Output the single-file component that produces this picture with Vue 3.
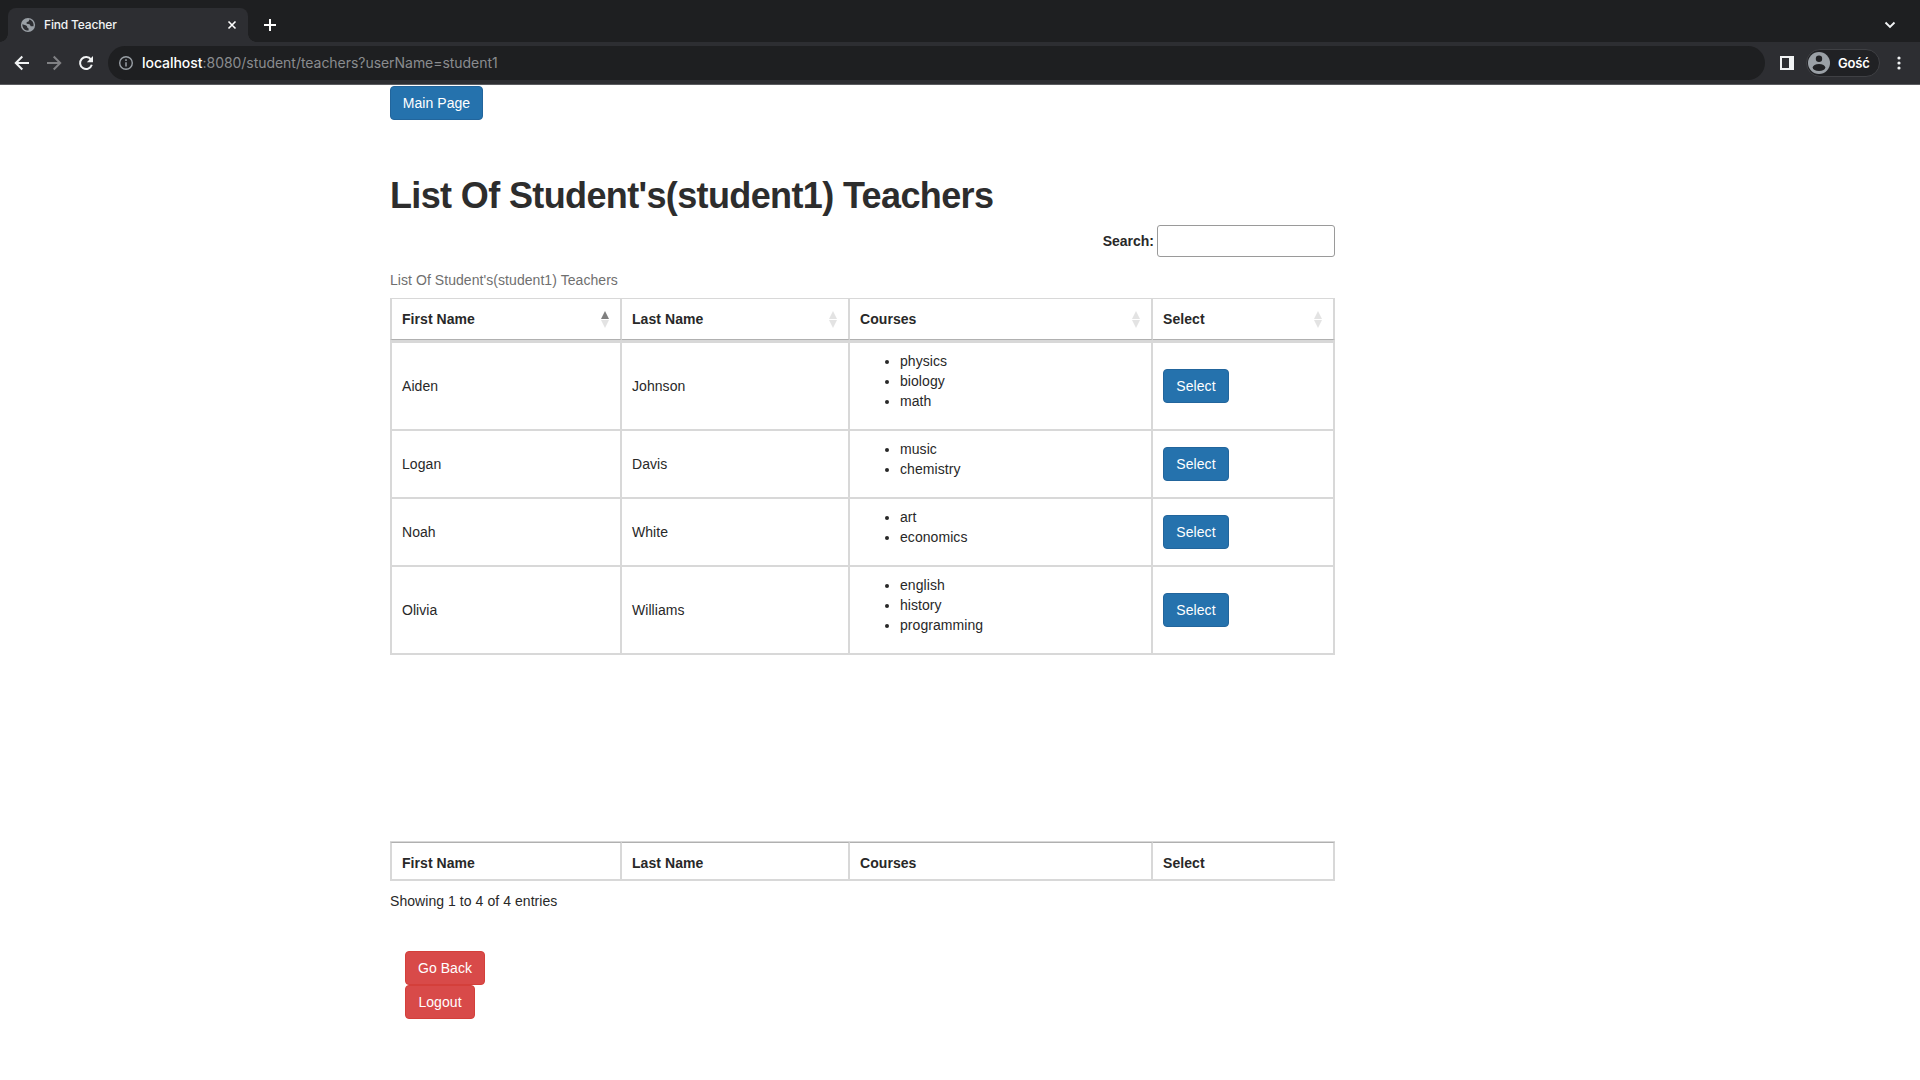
<script setup>
const columns = ['First Name', 'Last Name', 'Courses', 'Select']
const teachers = [
  { first: 'Aiden', last: 'Johnson', courses: ['physics', 'biology', 'math'] },
  { first: 'Logan', last: 'Davis', courses: ['music', 'chemistry'] },
  { first: 'Noah', last: 'White', courses: ['art', 'economics'] },
  { first: 'Olivia', last: 'Williams', courses: ['english', 'history', 'programming'] },
]
</script>

<template>
  <div class="window">
    <header class="tabstrip">
      <div class="tab">
        <svg class="globe" width="16" height="16" viewBox="0 0 16 16">
          <circle cx="8" cy="8" r="7.1" fill="#9aa0a6" />
          <path d="M2.300 7.200 5.600 8.300Q7.300 8.900 7.300 10.500L8.600 11.400V13.600C5 13.800 2.400 11.500 2.300 7.200ZM9.300 2.500 8.800 4.300 6.600 5.200V6.700L9.600 7.200 10.800 9.300H13.500C14.100 6 12.300 3.200 9.300 2.500Z" fill="#2d2e32" />
        </svg>
        <span class="tab-title">Find Teacher</span>
        <svg class="close" width="16" height="16" viewBox="0 0 16 16"><path d="M4.500 4.500l7 7M11.500 4.500l-7 7" stroke="#fff" stroke-width="1.600" /></svg>
      </div>
      <svg class="plus" width="16" height="16" viewBox="0 0 16 16"><path d="M8 2v12M2 8h12" stroke="#fff" stroke-width="2" /></svg>
      <svg class="chevron" width="12" height="8" viewBox="0 0 12 8"><path d="M1.500 1.500 6 6l4.500-4.500" fill="none" stroke="#f1f3f4" stroke-width="1.900" /></svg>
    </header>
    <nav class="toolbar">
      <svg class="back" width="16" height="16" viewBox="0 0 16 16"><path d="M15 8H2.500M8.300 1.500 1.800 8l6.500 6.500" fill="none" stroke="#f1f3f4" stroke-width="2" /></svg>
      <svg class="forward" width="16" height="16" viewBox="0 0 16 16"><path d="M1 8h12.500M7.700 1.500 14.200 8l-6.500 6.500" fill="none" stroke="#808184" stroke-width="2" /></svg>
      <svg class="reload" width="16" height="16" viewBox="0 0 16 16"><path d="M13 4.600A6 6 0 1 0 13.800 9.800" fill="none" stroke="#f1f3f4" stroke-width="2" /><path d="M15 1v6.200H8.800z" fill="#f1f3f4" /></svg>
      <div class="omnibox">
        <svg width="16" height="16" viewBox="0 0 16 16"><circle cx="8" cy="8" r="6.300" fill="none" stroke="#9aa0a6" stroke-width="1.400" /><path d="M8 7.200v4.200M8 4.300v1.600" stroke="#9aa0a6" stroke-width="1.500" /></svg>
        <span class="url"><b>localhost</b>:8080/student/teachers?userName=student1</span>
      </div>
      <svg class="panel" width="14" height="14" viewBox="0 0 14 14"><path fill-rule="evenodd" d="M0 0h14v14H0zM2 2v10h7V2z" fill="#f1f3f4" /></svg>
      <div class="profile">
        <svg width="22" height="22" viewBox="0 0 22 22"><circle cx="11" cy="11" r="11" fill="#9aa0a6" /><circle cx="11" cy="6.800" r="3.200" fill="#202124" /><ellipse cx="11" cy="15.500" rx="6.300" ry="3.600" fill="#202124" /></svg>
        <span>Gość</span>
      </div>
      <svg class="dots" width="4" height="14" viewBox="0 0 4 14"><g fill="#f1f3f4"><circle cx="2" cy="2" r="1.600" /><circle cx="2" cy="7" r="1.600" /><circle cx="2" cy="12" r="1.600" /></g></svg>
    </nav>
    <main class="page">
      <a class="btn primary main-page">Main Page</a>
      <h1>List Of Student's(student1) Teachers</h1>
      <label class="search"><span>Search:</span><input type="text" /></label>
      <p class="caption">List Of Student's(student1) Teachers</p>
      <table class="head">
        <colgroup><col class="c1" /><col class="c2" /><col class="c3" /><col class="c4" /></colgroup>
        <thead>
          <tr>
            <th v-for="(name, i) in columns" :key="name">
              <div class="heading">
                <span>{{ name }}</span>
                <svg width="8" height="17" viewBox="0 0 8 17">
                  <path d="M4 0l4 8H0z" :fill="i === 0 ? '#808080' : '#e3e3e3'" />
                  <path d="M0 9h8l-4 8z" fill="#e3e3e3" />
                </svg>
              </div>
            </th>
          </tr>
        </thead>
      </table>
      <div class="scroll">
        <table>
          <colgroup><col class="c1" /><col class="c2" /><col class="c3" /><col class="c4" /></colgroup>
          <tbody>
            <tr v-for="t in teachers" :key="t.first">
              <td>{{ t.first }}</td>
              <td>{{ t.last }}</td>
              <td><ul><li v-for="c in t.courses" :key="c">{{ c }}</li></ul></td>
              <td><a class="btn primary select">Select</a></td>
            </tr>
          </tbody>
        </table>
      </div>
      <table class="foot">
        <colgroup><col class="c1" /><col class="c2" /><col class="c3" /><col class="c4" /></colgroup>
        <tfoot><tr><th v-for="name in columns" :key="name">{{ name }}</th></tr></tfoot>
      </table>
      <p class="info">Showing 1 to 4 of 4 entries</p>
      <div class="actions">
        <a class="btn danger back-btn">Go Back</a>
        <a class="btn danger logout">Logout</a>
      </div>
    </main>
  </div>
</template>

<style>
html, body { margin: 0; background: #fff; }
</style>

<style scoped>
.window { width: 1920px; height: 1080px; overflow: hidden; background: #fff; color: #282828; font: 14px/20px "Liberation Sans", Arial, sans-serif; letter-spacing: 0.06px; }
.window * { box-sizing: border-box; }
svg { display: block; flex: none; }
.tabstrip { display: flex; align-items: flex-start; height: 42px; background: #1e1f21; }
.tab { position: relative; display: flex; align-items: center; width: 240px; height: 34px; margin: 8px 0 0 8px; padding: 0 8px 0 12px; border-radius: 8px 8px 0 0; background: #2d2e32; }
.tab::before, .tab::after { content: ""; position: absolute; bottom: 0; width: 8px; height: 8px; }
.tab::before { left: -8px; background: radial-gradient(circle at 0 0, #1e1f21 7.500px, #2d2e32 8px); }
.tab::after { right: -8px; background: radial-gradient(circle at 100% 0, #1e1f21 7.500px, #2d2e32 8px); }
.tab-title { flex: 1; margin-left: 8px; color: #f1f3f4; font: 500 12px/16px Inter, sans-serif; letter-spacing: -0.17px; white-space: nowrap; }
.plus { margin: 17px 0 0 14px; }
.chevron { margin: 21px 24px 0 auto; }
.toolbar { display: flex; align-items: center; height: 43px; padding: 0 23px 1px 14px; border-bottom: 1px solid #5a5b5f; background: #2d2e32; }
.forward { margin-left: 16px; }
.reload { margin-left: 16px; }
.omnibox { display: flex; align-items: center; width: 1657px; height: 34px; margin-left: 14px; padding-left: 10px; border-radius: 17px; background: #1e1f21; }
.url { margin-left: 8px; color: #8a8c8f; font: 14px/20px Inter, sans-serif; letter-spacing: -0.04px; white-space: nowrap; }
.url b { color: #fff; font-weight: 500; }
.panel { margin-left: 15px; }
.profile { display: flex; align-items: center; width: 74px; height: 28px; margin-left: 12px; padding-left: 1px; border: 1px solid #3f4044; border-radius: 14px; background: #202124; color: #fff; font: 600 13px/18px Inter, sans-serif; letter-spacing: -0.2px; }
.profile span { margin-left: 8px; }
.dots { margin-left: auto; margin-right: -4px; }
.page { display: flex; flex-direction: column; align-items: flex-start; width: 945px; margin-left: 390px; padding-top: 1px; }
.btn { display: flex; align-items: center; justify-content: center; height: 34px; border: 1px solid; border-radius: 4px; color: #fff; white-space: nowrap; }
.primary { border-color: #22659c; background: #2572ad; }
.danger { border-color: #d43f3a; background: #d84a49; }
.main-page { width: 93px; }
h1 { margin: 56px 0 9px; color: #2d2d2d; font-size: 36px; line-height: 40px; font-weight: 700; letter-spacing: -0.63px; white-space: nowrap; }
.search { display: flex; align-items: center; align-self: flex-end; font-weight: 700; }
.search span { letter-spacing: 0; }
.search input { width: 178px; height: 32px; margin-left: 3px; padding: 0 5px; border: 1px solid #9a9a9a; border-radius: 3px; background: #fff; }
.caption { margin: 13px 0 8px; color: #6f6f6f; white-space: nowrap; }
table { width: 945px; table-layout: fixed; border-collapse: separate; border-spacing: 0; }
.c1 { width: 232px; } .c2 { width: 228px; } .c3 { width: 303px; } .c4 { width: 182px; }
th, td { padding: 0 10px; border: 0 solid #d8d8d8; border-right-width: 2px; text-align: left; vertical-align: middle; }
th:first-child, td:first-child { border-left-width: 2px; }
.head th { height: 42px; border-top-width: 1px; border-bottom: 1px solid #b0b0b0; }
.heading { display: flex; align-items: center; justify-content: space-between; padding-right: 1.500px; }
.scroll { height: 501px; }
.scroll tr:first-child td { border-top-width: 3px; }
td { padding-top: 8px; padding-bottom: 8px; border-bottom-width: 2px; }
ul { margin: 0 0 10px; padding-left: 40px; list-style: disc; }
.select { width: 66px; }
.foot { border-top: 1px solid #d8d8d8; }
.foot th { height: 39px; padding-top: 3px; border-top: 1px solid #b0b0b0; border-bottom-width: 2px; }
.info { margin: 10px 0 0; }
.actions { display: flex; flex-direction: column; margin: 40px 0 0 15px; }
.back-btn { width: 80px; }
.logout { width: 70px; }
</style>
